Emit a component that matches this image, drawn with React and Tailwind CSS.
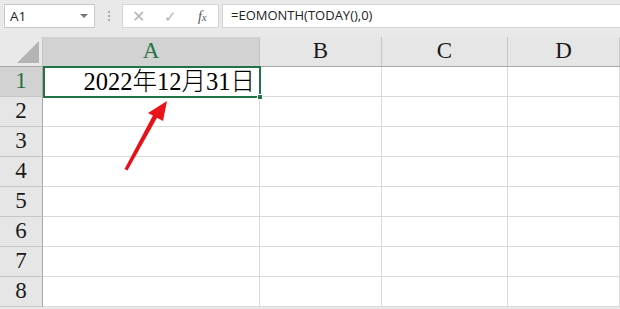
import React from "react";

const cols = [
  { key: "A", w: "w-[217px]" },
  { key: "B", w: "w-[122px]" },
  { key: "C", w: "w-[126px]" },
  { key: "D", w: "flex-1" },
];

const rows = [1, 2, 3, 4, 5, 6, 7, 8];

const serif = { fontFamily: '"Liberation Serif", "Noto Sans CJK SC", serif' };

function Arrow() {
  return (
    <svg className="absolute left-0 top-0 pointer-events-none" width="620" height="309">
      <polygon points="124.5,169 127.5,170.5 158,116 154,113.5" fill="#e4121a" />
      <polygon points="167,101 148,113 163,121" fill="#e8141a" />
    </svg>
  );
}

export default function App() {
  return (
    <div
      className="relative w-[620px] h-[309px] overflow-hidden bg-[#e9e9e9]"
      style={{ fontFamily: '"Open Sans", "Noto Sans", sans-serif' }}
    >
      {/* formula bar */}
      <div className="h-[37px] flex items-start pt-[4px] pl-[4px]">
        <div className="w-[91px] h-[24px] bg-white border border-[#c8c8c8] flex items-center justify-between pl-[5px] pr-[6px]">
          <span className="text-[13.5px] text-[#222]">A1</span>
          <span className="w-0 h-0 border-l-[4px] border-r-[4px] border-t-[4px] border-l-transparent border-r-transparent border-t-[#777]" />
        </div>
        <div className="w-[27px] h-[24px] flex flex-col items-center justify-center gap-[2px]">
          <span className="w-[2px] h-[2px] bg-[#aaa]" />
          <span className="w-[2px] h-[2px] bg-[#aaa]" />
          <span className="w-[2px] h-[2px] bg-[#aaa]" />
        </div>
        <div className="w-[97px] h-[24px] bg-white border border-[#d4d4d4] flex items-center">
          <span className="w-[32px] text-center text-[16px] leading-none text-[#b3b3b3]">✕</span>
          <span className="w-[32px] text-center text-[15px] leading-none text-[#b3b3b3]">✓</span>
          <span className="w-[32px] text-center text-[14px] italic text-[#555]" style={serif}>
            f<span className="text-[10px]">x</span>
          </span>
        </div>
        <div className="flex-1 ml-[3px] h-[24px] bg-white border border-[#d4d4d4] border-r-0 flex items-center pl-[8px]">
          <span className="text-[13px] text-[#222]">=EOMONTH(TODAY(),0)</span>
        </div>
      </div>

      {/* grid */}
      <div className="flex flex-col">
        <div className="flex h-[30px] border-b border-[#a8a8a8]">
          <div className="w-[43px] border-r border-[#c6c6c6] flex items-end justify-end pr-[3px] pb-[3px]">
            <svg width="22" height="22">
              <polygon points="22,0 22,22 0,22" fill="#b4b4b4" />
            </svg>
          </div>
          {cols.map((c) => (
            <div
              key={c.key}
              className={`${c.w} flex items-center justify-center border-r border-[#c6c6c6] text-[23px] ${
                c.key === "A" ? "bg-[#d2d2d2] text-[#217346]" : "bg-[#e6e6e6] text-[#1a1a1a]"
              }`}
              style={serif}
            >
              {c.key}
            </div>
          ))}
        </div>
        {rows.map((r) => (
          <div key={r} className="flex h-[30px]">
            <div
              className={`w-[43px] flex items-center justify-center border-r border-b border-[#a8a8a8] border-b-[#c6c6c6] text-[23px] ${
                r === 1 ? "bg-[#d2d2d2] text-[#217346]" : "bg-[#e6e6e6] text-[#1a1a1a]"
              }`}
              style={serif}
            >
              {r}
            </div>
            {cols.map((c) => (
              <div key={c.key} className={`${c.w} bg-white border-r border-b border-[#d9d9d9] flex items-center justify-end pr-[4px]`}>
                {r === 1 && c.key === "A" && (
                  <span className="text-[24.5px] font-light text-black leading-none pt-[2px]" style={serif}>
                    2022年12月31日
                  </span>
                )}
              </div>
            ))}
          </div>
        ))}
      </div>

      {/* active cell */}
      <div className="absolute left-[43px] top-[66px] w-[218px] h-[32px] border-2 border-[#217346] pointer-events-none">
        <div className="absolute -right-[4px] -bottom-[4px] w-[6px] h-[6px] bg-[#217346] border border-white" />
      </div>

      <Arrow />
    </div>
  );
}
